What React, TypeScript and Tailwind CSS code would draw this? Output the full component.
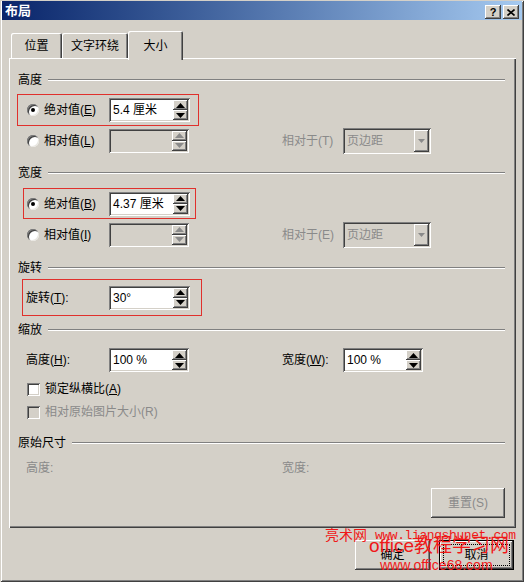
import React from 'react';

function Arrow({ up, disabled }: { up?: boolean; disabled?: boolean }) {
  const c = disabled ? '#8a8a8a' : '#000000';
  return (
    <svg width="9" height="5" viewBox="0 0 9 5">
      {up ? <path d="M4.5 0 L9 5 H0 Z" fill={c} /> : <path d="M0 0 H9 L4.5 5 Z" fill={c} />}
    </svg>
  );
}

function SpinBtn({ up, disabled }: { up?: boolean; disabled?: boolean }) {
  return (
    <div className="flex flex-1 items-center justify-center bg-[#d4d0c8] shadow-[inset_-1px_-1px_#404040,inset_1px_1px_#ffffff,inset_-2px_-2px_#808080]">
      <Arrow up={up} disabled={disabled} />
    </div>
  );
}

function Spin({ value, width, disabled }: { value?: string; width: string; disabled?: boolean }) {
  return (
    <div
      className={`flex h-[24px] p-[2px] ${width} ${disabled ? 'bg-[#d4d0c8]' : 'bg-white'} shadow-[inset_1px_1px_#808080,inset_-1px_-1px_#ffffff,inset_2px_2px_#404040,inset_-2px_-2px_#d4d0c8]`}
    >
      <div className="flex flex-1 items-center pl-[2px] text-[12px] leading-none text-black">{value}</div>
      <div className="flex w-[15px] flex-col">
        <SpinBtn up disabled={disabled} />
        <SpinBtn disabled={disabled} />
      </div>
    </div>
  );
}

function Select() {
  return (
    <div className="flex h-[26px] w-[88px] p-[2px] bg-[#d4d0c8] shadow-[inset_1px_1px_#808080,inset_-1px_-1px_#ffffff,inset_2px_2px_#404040,inset_-2px_-2px_#d4d0c8]">
      <div className="flex flex-1 items-center pl-[2px] text-[12px] text-[#8a8a8a]">页边距</div>
      <div className="flex w-[15px] items-center justify-center bg-[#d4d0c8] shadow-[inset_-1px_-1px_#404040,inset_1px_1px_#ffffff,inset_-2px_-2px_#808080]">
        <svg width="7" height="4" viewBox="0 0 7 4">
          <path d="M0 0 H7 L3.5 4 Z" fill="#8a8a8a" />
        </svg>
      </div>
    </div>
  );
}

function Radio({ checked }: { checked?: boolean }) {
  return (
    <div className="flex h-[12px] w-[12px] shrink-0 items-center justify-center rounded-full bg-white shadow-[inset_1px_1px_#808080,inset_-1px_-1px_#e8e6e0,inset_2px_2px_#404040]">
      {checked && <div className="h-[4px] w-[4px] rounded-full bg-black" />}
    </div>
  );
}

function Check({ disabled }: { disabled?: boolean }) {
  return (
    <div
      className={`h-[13px] w-[13px] shrink-0 ${disabled ? 'bg-[#d4d0c8]' : 'bg-white'} shadow-[inset_1px_1px_#808080,inset_-1px_-1px_#ffffff,inset_2px_2px_#404040,inset_-2px_-2px_#d4d0c8]`}
    />
  );
}

function Header({ children, className }: { children: React.ReactNode; className: string }) {
  return (
    <div className={`flex h-[16px] items-center ${className}`}>
      <span className="mr-[6px] text-[12px] leading-none">{children}</span>
      <div className="h-[2px] flex-1 border-t border-b border-t-[#808080] border-b-white" />
    </div>
  );
}

function Raised({ children, className }: { children: React.ReactNode; className: string }) {
  return (
    <div
      className={`flex items-center justify-center bg-[#d4d0c8] shadow-[inset_-1px_-1px_#404040,inset_1px_1px_#ffffff,inset_-2px_-2px_#808080] ${className}`}
    >
      {children}
    </div>
  );
}

export default function App() {
  return (
    <div className="relative h-[582px] w-[524px] overflow-hidden bg-[#d4d0c8] font-['Liberation_Sans','Noto_Sans_CJK_SC',sans-serif] text-[12px] text-black shadow-[inset_1px_1px_#d4d0c8,inset_-1px_-1px_#404040,inset_2px_2px_#ffffff,inset_-2px_-2px_#808080]">
      {/* title bar */}
      <div className="mx-[2px] mt-[1px] flex h-[19px] items-center bg-gradient-to-r from-[#0a246a] to-[#a6caf0] pl-[3px] pr-[3px]">
        <span className="flex-1 text-[13px] font-bold leading-none text-white">布局</span>
        <Raised className="mt-[3px] h-[14px] w-[16px]">
          <span className="text-[11px] font-bold leading-none">?</span>
        </Raised>
        <Raised className="ml-[2px] mt-[3px] h-[14px] w-[16px]">
          <svg width="8" height="7" viewBox="0 0 8 7">
            <path d="M0.5 0.5 L7.5 6.5 M7.5 0.5 L0.5 6.5" stroke="#000" strokeWidth="1.6" />
          </svg>
        </Raised>
      </div>

      {/* tabs */}
      <div className="mt-[11px] flex h-[27px] items-end pl-[11px]">
        <div className="flex h-[25px] w-[51px] items-center justify-center rounded-t-[2px] shadow-[inset_1px_1px_#ffffff,inset_-1px_0_#404040,inset_-2px_0_#808080]">
          位置
        </div>
        <div className="flex h-[25px] w-[66px] items-center justify-center rounded-t-[2px] shadow-[inset_1px_1px_#ffffff,inset_-1px_0_#404040,inset_-2px_0_#808080]">
          文字环绕
        </div>
        <div className="relative z-10 -mb-[2px] flex h-[29px] w-[55px] items-start justify-center rounded-t-[2px] bg-[#d4d0c8] pt-[6px] shadow-[inset_1px_1px_#ffffff,inset_-1px_0_#404040,inset_-2px_0_#808080]">
          大小
        </div>
      </div>

      {/* panel */}
      <div className="ml-[9px] h-[470px] w-[507px] pl-[9px] pr-[11px] pt-[14px] shadow-[inset_1px_1px_#ffffff,inset_-1px_-1px_#404040,inset_-2px_-2px_#808080]">
        <Header className="">高度</Header>
        <div className="mt-[6px] -ml-px flex h-[32px] w-[182px] items-center border border-[#e0302c] pl-[9px]">
          <div className="flex w-[82px] items-center gap-[5px]">
            <Radio checked />
            <span>绝对值(<u>E</u>)</span>
          </div>
          <Spin value="5.4 厘米" width="w-[81px]" />
        </div>
        <div className="mt-[1px] flex h-[27px] items-center pl-[9px]">
          <div className="flex w-[82px] items-center gap-[5px]">
            <Radio />
            <span>相对值(<u>L</u>)</span>
          </div>
          <Spin disabled width="w-[80px]" />
          <span className="ml-[93px] w-[61px] text-[#8a8a8a]">相对于(T)</span>
          <Select />
        </div>

        <Header className="mt-[11px]">宽度</Header>
        <div className="mt-[7px] ml-[5px] flex h-[31px] w-[173px] items-center border border-[#e0302c] pl-[3px]">
          <div className="flex w-[82px] items-center gap-[5px]">
            <Radio checked />
            <span>绝对值(<u>B</u>)</span>
          </div>
          <Spin value="4.37 厘米" width="w-[81px]" />
        </div>
        <div className="mt-[2px] flex h-[27px] items-center pl-[9px]">
          <div className="flex w-[82px] items-center gap-[5px]">
            <Radio />
            <span>相对值(<u>I</u>)</span>
          </div>
          <Spin disabled width="w-[80px]" />
          <span className="ml-[93px] w-[61px] text-[#8a8a8a]">相对于(E)</span>
          <Select />
        </div>

        <Header className="mt-[12px]">旋转</Header>
        <div className="mt-[3px] ml-[4px] flex h-[37px] w-[180px] items-center border border-[#e0302c] pl-[3px]">
          <span className="w-[83px]">旋转(<u>T</u>):</span>
          <Spin value="30°" width="w-[81px]" />
        </div>

        <Header className="mt-[6px]">缩放</Header>
        <div className="mt-[10px] flex h-[24px] items-center pl-[8px]">
          <span className="w-[83px]">高度(<u>H</u>):</span>
          <Spin value="100 %" width="w-[80px]" />
          <span className="ml-[93px] w-[61px]">宽度(<u>W</u>):</span>
          <Spin value="100 %" width="w-[80px]" />
        </div>
        <div className="mt-[10px] flex h-[14px] items-center gap-[5px] pl-[9px]">
          <Check />
          <span>锁定纵横比(<u>A</u>)</span>
        </div>
        <div className="mt-[9px] flex h-[14px] items-center gap-[5px] pl-[9px]">
          <Check disabled />
          <span className="text-[#8a8a8a]">相对原始图片大小(R)</span>
        </div>

        <Header className="mt-[16px]">原始尺寸</Header>
        <div className="mt-[9px] flex h-[16px] items-center pl-[8px] text-[#8a8a8a]">
          <span className="w-[256px]">高度:</span>
          <span>宽度:</span>
        </div>
        <div className="mt-[12px] flex justify-end">
          <Raised className="h-[30px] w-[74px] text-[#8a8a8a]">重置(S)</Raised>
        </div>
      </div>

      {/* dialog buttons */}
      <div className="mt-[12px] flex justify-end gap-[9px] pr-[10px]">
        <Raised className="h-[30px] w-[75px]">确定</Raised>
        <div className="flex h-[30px] w-[75px] items-center justify-center bg-[#d4d0c8] p-[4px] shadow-[inset_-1px_-1px_#000000,inset_1px_1px_#000000,inset_-2px_-2px_#404040,inset_2px_2px_#ffffff,inset_-3px_-3px_#808080]">
          <div className="flex h-full w-full items-center justify-center border border-dotted border-black">取消</div>
        </div>
      </div>

      {/* watermark */}
      <div className="absolute left-[325px] top-[528px] flex items-center whitespace-nowrap leading-none text-[#f01818]">
        <span className="text-[14px]">亮术网</span>
        <span className="ml-[8px] font-['Liberation_Mono',monospace] text-[13px] tracking-[-0.4px]">www.liangshunet.com</span>
      </div>
      <div className="absolute left-[369px] top-[536px] whitespace-nowrap text-[19px] leading-none text-[#f01818]">
        office教程学习网
      </div>
      <div className="absolute left-[380px] top-[558px] whitespace-nowrap text-[14px] leading-none text-[#f01818]">
        www.office68.com
      </div>
    </div>
  );
}
